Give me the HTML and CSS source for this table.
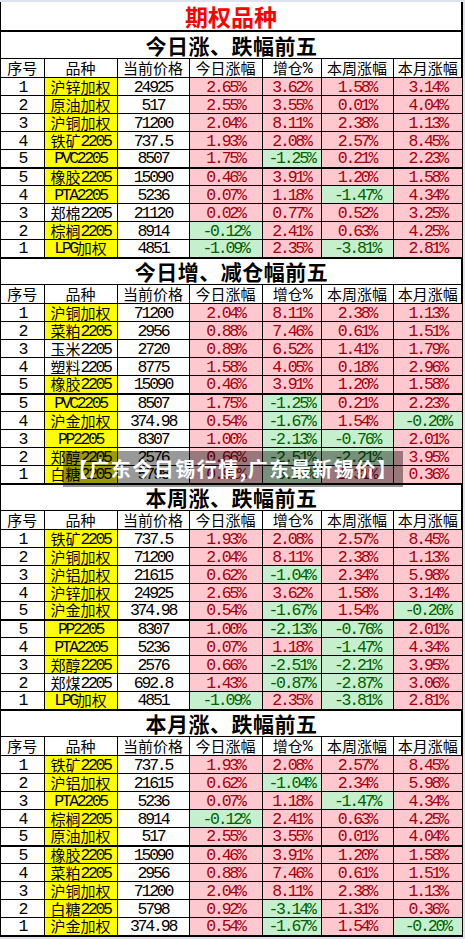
FILE: index.html
```html
<!DOCTYPE html>
<html lang="zh-CN">
<head>
  <meta charset="UTF-8" />
  <meta name="viewport" content="width=device-width, initial-scale=1.0"/>
  <title>期权品种</title>
  <link rel="stylesheet" href="styles.css">
</head>
<body>
  <div class="sheet">
    <div class="sheet-title">期权品种</div>
    <table class="grid" id="grid">
      <colgroup>
        <col style="width:43px"><col style="width:73px"><col style="width:72px"><col style="width:73px">
        <col style="width:59px"><col style="width:72px"><col style="width:69px">
      </colgroup>
      <tbody id="gridBody"></tbody>
    </table>
    <div class="banner">【广东今日锡行情,广东最新锡价】</div>
  </div>

  <script>
    const heads = ["序号", "品种", "当前价格", "今日涨幅", "增仓%", "本周涨幅", "本月涨幅"];

    // [no, name, highlight, price, day, oi, week, month]
    const sections = [
      { title: "今日涨、跌幅前五", rows: [
        [1, "沪锌加权", 1, "24925", "2.65%", "3.62%", "1.58%", "3.14%"],
        [2, "原油加权", 1, "517", "2.55%", "3.55%", "0.01%", "4.04%"],
        [3, "沪铜加权", 1, "71200", "2.04%", "8.11%", "2.38%", "1.13%"],
        [4, "铁矿2205", 1, "737.5", "1.93%", "2.08%", "2.57%", "8.45%"],
        [5, "PVC2205", 1, "8507", "1.75%", "-1.25%", "0.21%", "2.23%"],
        [5, "橡胶2205", 1, "15090", "0.46%", "3.91%", "1.20%", "1.58%"],
        [4, "PTA2205", 1, "5236", "0.07%", "1.18%", "-1.47%", "4.34%"],
        [3, "郑棉2205", 0, "21120", "0.02%", "0.77%", "0.52%", "3.25%"],
        [2, "棕榈2205", 1, "8914", "-0.12%", "2.41%", "0.63%", "4.25%"],
        [1, "LPG加权", 1, "4851", "-1.09%", "2.35%", "-3.81%", "2.81%"]
      ]},
      { title: "今日增、减仓幅前五", rows: [
        [1, "沪铜加权", 1, "71200", "2.04%", "8.11%", "2.38%", "1.13%"],
        [2, "菜粕2205", 1, "2956", "0.88%", "7.46%", "0.61%", "1.51%"],
        [3, "玉米2205", 0, "2720", "0.89%", "6.52%", "1.41%", "1.79%"],
        [4, "塑料2205", 0, "8775", "1.58%", "4.05%", "0.18%", "2.96%"],
        [5, "橡胶2205", 1, "15090", "0.46%", "3.91%", "1.20%", "1.58%"],
        [5, "PVC2205", 1, "8507", "1.75%", "-1.25%", "0.21%", "2.23%"],
        [4, "沪金加权", 1, "374.98", "0.54%", "-1.67%", "1.54%", "-0.20%"],
        [3, "PP2205", 1, "8307", "1.00%", "-2.13%", "-0.76%", "2.01%"],
        [2, "郑醇2205", 1, "2576", "0.66%", "-2.51%", "-2.21%", "3.95%"],
        [1, "白糖2205", 1, "5798", "0.92%", "-3.14%", "1.31%", "0.36%"]
      ]},
      { title: "本周涨、跌幅前五", rows: [
        [1, "铁矿2205", 1, "737.5", "1.93%", "2.08%", "2.57%", "8.45%"],
        [2, "沪铜加权", 1, "71200", "2.04%", "8.11%", "2.38%", "1.13%"],
        [3, "沪铝加权", 1, "21615", "0.62%", "-1.04%", "2.34%", "5.98%"],
        [4, "沪锌加权", 1, "24925", "2.65%", "3.62%", "1.58%", "3.14%"],
        [5, "沪金加权", 1, "374.98", "0.54%", "-1.67%", "1.54%", "-0.20%"],
        [5, "PP2205", 1, "8307", "1.00%", "-2.13%", "-0.76%", "2.01%"],
        [4, "PTA2205", 1, "5236", "0.07%", "1.18%", "-1.47%", "4.34%"],
        [3, "郑醇2205", 1, "2576", "0.66%", "-2.51%", "-2.21%", "3.95%"],
        [2, "郑煤2205", 0, "692.8", "1.43%", "-0.87%", "-2.87%", "3.06%"],
        [1, "LPG加权", 1, "4851", "-1.09%", "2.35%", "-3.81%", "2.81%"]
      ]},
      { title: "本月涨、跌幅前五", rows: [
        [1, "铁矿2205", 1, "737.5", "1.93%", "2.08%", "2.57%", "8.45%"],
        [2, "沪铝加权", 1, "21615", "0.62%", "-1.04%", "2.34%", "5.98%"],
        [3, "PTA2205", 1, "5236", "0.07%", "1.18%", "-1.47%", "4.34%"],
        [4, "棕榈2205", 1, "8914", "-0.12%", "2.41%", "0.63%", "4.25%"],
        [5, "原油加权", 1, "517", "2.55%", "3.55%", "0.01%", "4.04%"],
        [5, "橡胶2205", 1, "15090", "0.46%", "3.91%", "1.20%", "1.58%"],
        [4, "菜粕2205", 1, "2956", "0.88%", "7.46%", "0.61%", "1.51%"],
        [3, "沪铜加权", 1, "71200", "2.04%", "8.11%", "2.38%", "1.13%"],
        [2, "白糖2205", 1, "5798", "0.92%", "-3.14%", "1.31%", "0.36%"],
        [1, "沪金加权", 1, "374.98", "0.54%", "-1.67%", "1.54%", "-0.20%"]
      ]}
    ];

    // wrap latin runs so digits get the narrow font but keep one baseline
    function mixed(text) {
      return String(text).replace(/([\x21-\x7e]+)/g, '<span class="en">$1</span>');
    }

    function pctCell(value) {
      const cls = value.charAt(0) === "-" ? "down" : "up";
      return '<td class="num ' + cls + '">' + mixed(value) + '</td>';
    }

    function renderGrid() {
      let html = "";
      sections.forEach(sec => {
        html += '<tr class="sec-row"><td colspan="7">' + sec.title + '</td></tr>';
        html += '<tr class="head-row">' + heads.map(h => '<td>' + mixed(h) + '</td>').join("") + '</tr>';
        sec.rows.forEach((r, i) => {
          let cls = "data-row";
          if (i === 5) cls += " split";
          if (i === 9) cls += " last";
          html += '<tr class="' + cls + '">' +
            '<td class="num">' + mixed(r[0]) + '</td>' +
            '<td class="name' + (r[2] ? ' hl' : '') + '">' + mixed(r[1]) + '</td>' +
            '<td class="num">' + mixed(r[3]) + '</td>' +
            pctCell(r[4]) + pctCell(r[5]) + pctCell(r[6]) + pctCell(r[7]) +
            '</tr>';
        });
      });
      document.getElementById("gridBody").innerHTML = html;
    }

    renderGrid();
  </script>
</body>
</html>
```

FILE: styles.css
```css
* {
  box-sizing: border-box;
}

body {
  margin: 0;
  padding: 2px 0 0 0;
  background: #dde4ef;
  font-family: "Noto Sans CJK SC", sans-serif;
  color: #000;
}

.sheet {
  position: relative;
  width: 463px;
  background: #fff;
  border-left: 1px solid #000;
  border-right: 2px solid #000;
}

.sheet-title {
  height: 29px;
  border-bottom: 1px solid #000;
  text-align: center;
  font-size: 23px;
  font-weight: 700;
  line-height: 28px;
  color: #ff0000;
}

.grid {
  width: 100%;
  border-collapse: collapse;
  table-layout: fixed;
}

.grid td {
  padding: 0;
  border: 1px solid #000;
  text-align: center;
  vertical-align: middle;
  white-space: nowrap;
  overflow: hidden;
  font-size: 15px;
  line-height: 16px;
}

.grid tr td:first-child {
  border-left: none;
}

.grid tr td:last-child {
  border-right: none;
}

.sec-row td {
  height: 27px;
  font-size: 21px;
  font-weight: 700;
  line-height: 24px;
  letter-spacing: 0.5px;
}

.head-row td {
  height: 19px;
}

.data-row td {
  height: 18px;
}

.data-row.split td {
  border-top: 2px solid #000;
}

.data-row.last td {
  border-bottom: 2px solid #000;
}

.en {
  font-family: "Liberation Mono", monospace;
  font-size: 16.5px;
  line-height: 10px;
  letter-spacing: -2.4px;
  vertical-align: 1px;
}

.num .en {
  letter-spacing: -2.2px;
}

.name.hl {
  background: #ffff00;
}

.up {
  background: #ffc7ce;
  color: #a5000f;
}

.down {
  background: #c6efce;
  color: #006100;
}

.banner {
  position: absolute;
  left: 62px;
  top: 449px;
  width: 340px;
  height: 36px;
  background: rgba(0, 0, 0, 0.4);
  color: #fff;
  font-size: 20px;
  font-weight: 700;
  line-height: 36px;
  text-align: center;
  letter-spacing: 1.5px;
  white-space: nowrap;
}
```
